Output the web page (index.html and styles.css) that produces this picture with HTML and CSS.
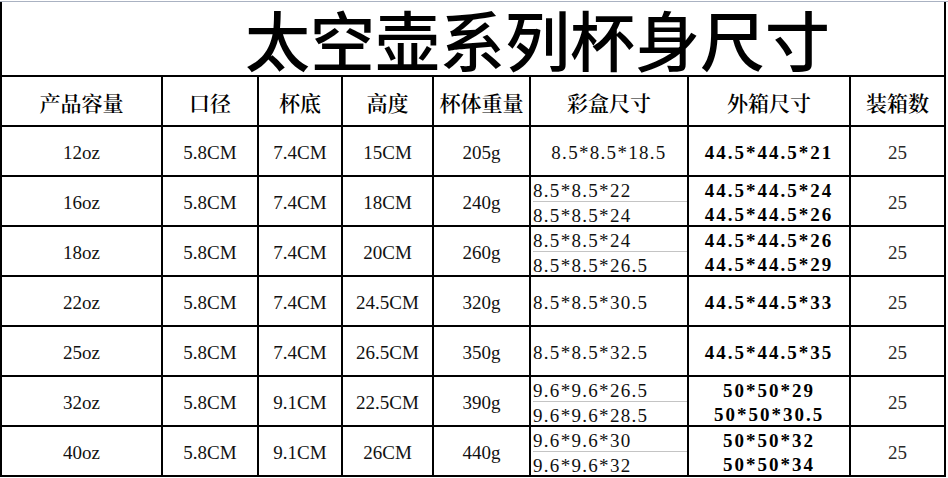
FILE: index.html
```html
<!DOCTYPE html>
<html lang="zh-CN">
<head>
<meta charset="utf-8">
<title>太空壶系列杯身尺寸</title>
<link rel="stylesheet" href="styles.css">
</head>
<body>
<div class="topline"></div>
<div class="sheet">
  <div class="title"><span>太空壶系列杯身尺寸</span></div>

  <div class="c h">产品容量</div>
  <div class="c h">口径</div>
  <div class="c h">杯底</div>
  <div class="c h">高度</div>
  <div class="c h">杯体重量</div>
  <div class="c h">彩盒尺寸</div>
  <div class="c h">外箱尺寸</div>
  <div class="c h">装箱数</div>

  <div class="c d">12oz</div>
  <div class="c d">5.8CM</div>
  <div class="c d">7.4CM</div>
  <div class="c d">15CM</div>
  <div class="c d">205g</div>
  <div class="c d box">8.5*8.5*18.5</div>
  <div class="c d outer">44.5*44.5*21</div>
  <div class="c d qty">25</div>

  <div class="c d">16oz</div>
  <div class="c d">5.8CM</div>
  <div class="c d">7.4CM</div>
  <div class="c d">18CM</div>
  <div class="c d">240g</div>
  <div class="c split box left"><div class="half sep">8.5*8.5*22</div><div class="half">8.5*8.5*24</div></div>
  <div class="c split outer"><div class="half">44.5*44.5*24</div><div class="half">44.5*44.5*26</div></div>
  <div class="c d qty">25</div>

  <div class="c d">18oz</div>
  <div class="c d">5.8CM</div>
  <div class="c d">7.4CM</div>
  <div class="c d">20CM</div>
  <div class="c d">260g</div>
  <div class="c split box left"><div class="half sep">8.5*8.5*24</div><div class="half">8.5*8.5*26.5</div></div>
  <div class="c split outer"><div class="half">44.5*44.5*26</div><div class="half">44.5*44.5*29</div></div>
  <div class="c d qty">25</div>

  <div class="c d">22oz</div>
  <div class="c d">5.8CM</div>
  <div class="c d">7.4CM</div>
  <div class="c d">24.5CM</div>
  <div class="c d">320g</div>
  <div class="c d box left">8.5*8.5*30.5</div>
  <div class="c d outer">44.5*44.5*33</div>
  <div class="c d qty">25</div>

  <div class="c d">25oz</div>
  <div class="c d">5.8CM</div>
  <div class="c d">7.4CM</div>
  <div class="c d">26.5CM</div>
  <div class="c d">350g</div>
  <div class="c d box left">8.5*8.5*32.5</div>
  <div class="c d outer">44.5*44.5*35</div>
  <div class="c d qty">25</div>

  <div class="c d">32oz</div>
  <div class="c d">5.8CM</div>
  <div class="c d">9.1CM</div>
  <div class="c d">22.5CM</div>
  <div class="c d">390g</div>
  <div class="c split box left"><div class="half sep">9.6*9.6*26.5</div><div class="half">9.6*9.6*28.5</div></div>
  <div class="c split outer"><div class="half">50*50*29</div><div class="half">50*50*30.5</div></div>
  <div class="c d qty">25</div>

  <div class="c d">40oz</div>
  <div class="c d">5.8CM</div>
  <div class="c d">9.1CM</div>
  <div class="c d">26CM</div>
  <div class="c d">440g</div>
  <div class="c split box left"><div class="half sep">9.6*9.6*30</div><div class="half">9.6*9.6*32</div></div>
  <div class="c split outer"><div class="half">50*50*32</div><div class="half">50*50*34</div></div>
  <div class="c d qty">25</div>
</div>
</body>
</html>
```
FILE: styles.css
```css
html, body {
  margin: 0;
  padding: 0;
  background: #fff;
}

body {
  width: 948px;
  height: 478px;
  overflow: hidden;
  color: #111;
  font-family: "Liberation Serif", "Noto Sans CJK SC", serif;
}

.topline {
  height: 1px;
  margin-top: 1px;
  background: #aab2c2;
}

.sheet {
  display: grid;
  grid-template-columns: 161px 96px 84px 91px 97px 158px 162px 95px;
  grid-template-rows: 75px repeat(8, 50px);
  width: max-content;
  border-left: 2px solid #000;
}

.title {
  grid-column: 1 / -1;
  box-sizing: border-box;
  border-right: 2px solid #000;
  border-bottom: 2px solid #000;
  padding: 4px 0 0 243px;
  font-family: "Noto Sans CJK SC", sans-serif;
  font-weight: 500;
  font-size: 65px;
  line-height: 65px;
  color: #000;
  white-space: nowrap;
}

.c {
  box-sizing: border-box;
  border-right: 2px solid #000;
  border-bottom: 2px solid #000;
  display: flex;
  align-items: center;
  justify-content: center;
  white-space: nowrap;
}

.h {
  padding-top: 2px;
  font-family: "Noto Serif CJK SC", "Noto Sans CJK SC", serif;
  font-weight: 600;
  font-size: 21px;
  line-height: 24px;
  color: #000;
}

.d {
  padding-top: 4px;
  font-size: 19px;
  line-height: 24px;
}

.box {
  letter-spacing: 1.3px;
}

.left {
  justify-content: flex-start;
  padding-left: 2px;
}

.outer {
  font-weight: 700;
  font-size: 19px;
  letter-spacing: 2px;
  color: #000;
}

.qty {
  color: #2a2a2a;
}

.split {
  flex-direction: column;
  align-items: stretch;
  justify-content: flex-start;
  font-size: 19px;
}

.half {
  box-sizing: border-box;
  height: 24px;
  padding-top: 3px;
  line-height: 24px;
  display: flex;
  align-items: center;
}

.half.sep {
  height: 25px;
  border-bottom: 1px solid #c4c4c4;
}

.split.outer .half {
  justify-content: center;
}

.split.left {
  padding-left: 2px;
}
```
